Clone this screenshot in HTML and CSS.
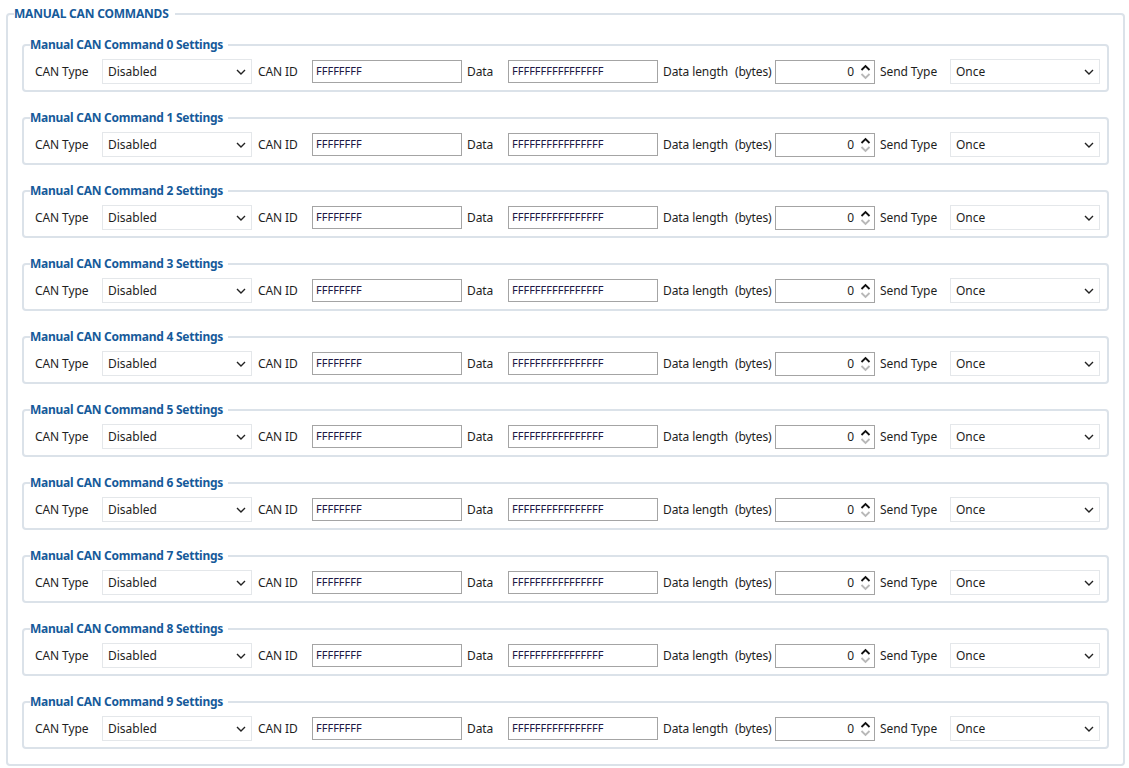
FILE: index.html
```html
<!DOCTYPE html>
<html lang="en">
<head>
    <meta charset="UTF-8">
    <title>Manual CAN Commands</title>
    <link rel="stylesheet" href="styles.css">
</head>
<body>
    <fieldset class="group outer">
        <legend class="outer-title">MANUAL CAN COMMANDS</legend>
        <div id="list"></div>
    </fieldset>

    <template id="cmdTemplate">
        <fieldset class="group cmd">
            <legend class="cmd-title">Manual CAN Command <span class="num">0</span> Settings</legend>
            <div class="row">
                <span class="lbl lbl-type">CAN Type</span>
                <div class="combo">
                    <span>Disabled</span>
                    <svg class="chev" width="10" height="6" viewBox="0 0 10 6"><path d="M1 1 L5 5 L9 1" fill="none" stroke="#222" stroke-width="1.4"/></svg>
                </div>
                <span class="lbl lbl-id">CAN ID</span>
                <div class="text-box">FFFFFFFF</div>
                <span class="lbl lbl-data">Data</span>
                <div class="text-box">FFFFFFFFFFFFFFFF</div>
                <span class="lbl lbl-len">Data length</span>
                <span class="lbl lbl-bytes">(bytes)</span>
                <div class="spin">
                    <span class="spin-val">0</span>
                    <div class="spin-btns">
                        <svg width="11" height="7" viewBox="0 0 11 7"><path d="M1.5 6 L5.5 2 L9.5 6" fill="none" stroke="#111" stroke-width="1.8"/></svg>
                        <svg width="11" height="7" viewBox="0 0 11 7"><path d="M1.5 1 L5.5 5 L9.5 1" fill="none" stroke="#b8b8b8" stroke-width="1.8"/></svg>
                    </div>
                </div>
                <span class="lbl lbl-send">Send Type</span>
                <div class="combo">
                    <span>Once</span>
                    <svg class="chev" width="10" height="6" viewBox="0 0 10 6"><path d="M1 1 L5 5 L9 1" fill="none" stroke="#222" stroke-width="1.4"/></svg>
                </div>
            </div>
        </fieldset>
    </template>

    <script>
        // build the ten command rows
        const list = document.getElementById('list');
        const tpl = document.getElementById('cmdTemplate');
        for (let i = 0; i < 10; i++) {
            const node = tpl.content.cloneNode(true);
            node.querySelector('.num').textContent = i;
            list.appendChild(node);
        }
    </script>
</body>
</html>
```

FILE: styles.css
```css
/* General Styles */
body, html {
    margin: 0;
    padding: 0;
    background: #ffffff;
    font-family: 'Noto Sans', 'Open Sans', sans-serif;
    font-size: 12px;
    color: #1e1e1e;
}

.group {
    border: 2px solid #dbe2e9;
    border-radius: 4px;
}

.outer {
    margin: 6px 5px 0 6px;
    padding: 0 14px 15px 14px;
}

.outer-title {
    padding: 0 6px 0 0;
    margin-left: -8px;
    font-weight: bold;
    color: #165a9a;
    line-height: 16px;
    letter-spacing: -0.2px;
}

.cmd {
    margin: 18px 0 0 0;
    padding: 6px 7px 6px 11px;
}

.cmd:first-child {
    margin-top: 15px;
}

.cmd-title {
    padding: 0 5px 0 0;
    margin-left: -5px;
    font-weight: bold;
    color: #165a9a;
    line-height: 16px;
    letter-spacing: -0.25px;
}

.row {
    display: flex;
    align-items: center;
    height: 25px;
}

.lbl {
    white-space: nowrap;
    letter-spacing: -0.1px;
}

.lbl-type { width: 67px; }
.lbl-id { width: 54px; margin-left: 6px; }
.lbl-data { width: 41px; margin-left: 5px; }
.lbl-len { width: 72px; margin-left: 5px; }
.lbl-bytes { width: 40px; }
.lbl-send { width: 70px; margin-left: 5px; }

.combo {
    width: 150px;
    height: 25px;
    box-sizing: border-box;
    border: 1px solid #e4e7ea;
    background: #fff;
    display: flex;
    align-items: center;
    justify-content: space-between;
    padding: 0 5px 0 5px;
}

.text-box {
    width: 150px;
    height: 23px;
    box-sizing: border-box;
    border: 1px solid #a4a4a4;
    padding: 0 3px;
    line-height: 19px;
    color: #1d1845;
    font-size: 11px;
}

.spin {
    width: 100px;
    height: 24px;
    box-sizing: border-box;
    border: 1px solid #a4a4a4;
    display: flex;
    align-items: center;
    justify-content: flex-end;
    padding-right: 1px;
}

.spin-val {
    margin-right: 4px;
    color: #1e1e1e;
}

.spin-btns {
    display: flex;
    flex-direction: column;
    gap: 2px;
    width: 15px;
    align-items: center;
}

.spin-btns svg {
    display: block;
}
```
